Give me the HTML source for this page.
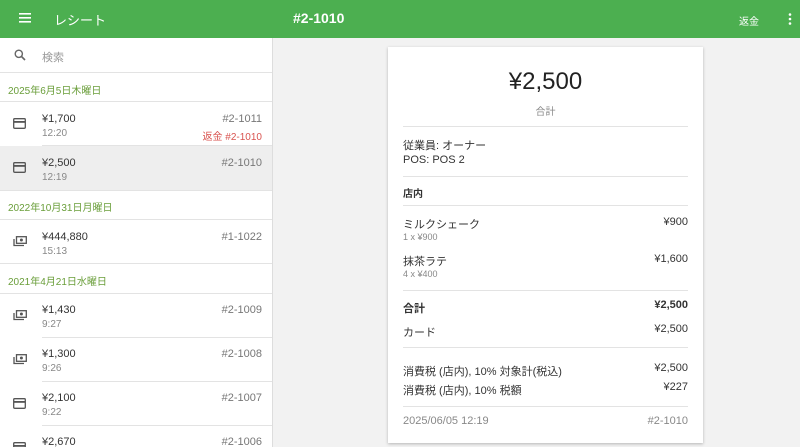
<!DOCTYPE html>
<html><head><meta charset="utf-8"><style>
*{margin:0;padding:0;box-sizing:border-box}
body{width:800px;height:447px;overflow:hidden;background:#f2f2f2;font-family:"Liberation Sans","Noto Sans CJK JP",sans-serif;position:relative;color:#333}
.a{position:absolute;white-space:nowrap}
#hdr{position:absolute;left:0;top:0;width:800px;height:38px;background:#4caf50;color:#fff}
#left{position:absolute;left:0;top:38px;width:273px;height:409px;background:#fff;border-right:1px solid #ddd;overflow:hidden}
.line{position:absolute;height:1px;background:#e3e3e3}
.date{color:#6a9e3a;font-size:10px}
.amt{font-size:11px;color:#333}
.tm{font-size:10px;color:#888}
.no{font-size:11px;color:#777;right:10px}
#card{position:absolute;left:388px;top:47px;width:315px;height:396px;background:#fff;box-shadow:0 1px 3px rgba(0,0,0,.25)}
#card .t{font-size:11px;color:#333}
#card .r{right:15px}
#card .l{left:15px}
</style></head><body>
<div id="hdr">
 <svg class="a" style="left:19px;top:13px" width="12" height="10"><rect y="0" width="12" height="1.6" fill="#fff"/><rect y="4" width="12" height="1.6" fill="#fff"/><rect y="8" width="12" height="1.6" fill="#fff"/></svg>
 <div class="a" style="left:54px;top:10px;font-size:13px">レシート</div>
 <div class="a" style="left:293px;top:10px;font-size:14px;font-weight:bold">#2-1010</div>
 <div class="a" style="left:739px;top:13px;font-size:10px">返金</div>
 <svg class="a" style="left:788px;top:13px" width="4" height="12"><circle cx="2" cy="1.5" r="1.3" fill="#fff"/><circle cx="2" cy="6" r="1.3" fill="#fff"/><circle cx="2" cy="10.5" r="1.3" fill="#fff"/></svg>
</div>
<div id="left">
 <svg class="a" style="left:14px;top:11px" width="12" height="12"><circle cx="4.8" cy="4.8" r="3.6" fill="none" stroke="#666" stroke-width="1.4"/><path d="M7.5 7.5L11 11" stroke="#666" stroke-width="1.6"/></svg>
 <div class="a" style="left:42px;top:11px;font-size:11px;color:#999">検索</div>
 <div class="line" style="left:0;top:34px;width:273px"></div>
 <div class="a date" style="left:8px;top:44px">2025年6月5日木曜日</div>
 <div class="line" style="left:0;top:63px;width:273px"></div>
 <svg class="a" style="left:13px;top:80px" width="13" height="11"><rect x=".7" y=".7" width="11.6" height="9.6" rx="1" fill="none" stroke="#555" stroke-width="1.3"/><rect x="1" y="3" width="11" height="1.8" fill="#555"/></svg>
 <div class="a amt" style="left:42px;top:75px">¥1,700</div>
 <div class="a tm" style="left:42px;top:90px">12:20</div>
 <div class="a no" style="top:75px">#2-1011</div>
 <div class="a" style="right:10px;top:90px;font-size:10px;color:#d9534f">返金 #2-1010</div>
 <div class="line" style="left:42px;top:107px;width:231px"></div>
 <div class="a" style="left:0;top:108px;width:273px;height:44px;background:#eee"></div>
 <svg class="a" style="left:13px;top:124px" width="13" height="11"><rect x=".7" y=".7" width="11.6" height="9.6" rx="1" fill="none" stroke="#555" stroke-width="1.3"/><rect x="1" y="3" width="11" height="1.8" fill="#555"/></svg>
 <div class="a amt" style="left:42px;top:119px">¥2,500</div>
 <div class="a tm" style="left:42px;top:134px">12:19</div>
 <div class="a no" style="top:119px">#2-1010</div>
 <div class="line" style="left:0;top:152px;width:273px"></div>
 <div class="a date" style="left:8px;top:161px">2022年10月31日月曜日</div>
 <div class="line" style="left:0;top:181px;width:273px"></div>
 <svg class="a" style="left:13px;top:198px" width="14" height="11"><rect x="3.5" y=".7" width="9.8" height="6.6" fill="none" stroke="#555" stroke-width="1.3"/><circle cx="8.4" cy="4" r="1.5" fill="#555"/><path d="M1 3v6.5h10" fill="none" stroke="#555" stroke-width="1.3"/></svg>
 <div class="a amt" style="left:42px;top:193px">¥444,880</div>
 <div class="a tm" style="left:42px;top:208px">15:13</div>
 <div class="a no" style="top:193px">#1-1022</div>
 <div class="line" style="left:0;top:225px;width:273px"></div>
 <div class="a date" style="left:8px;top:235px">2021年4月21日水曜日</div>
 <div class="line" style="left:0;top:255px;width:273px"></div>
 <svg class="a" style="left:13px;top:272px" width="14" height="11"><rect x="3.5" y=".7" width="9.8" height="6.6" fill="none" stroke="#555" stroke-width="1.3"/><circle cx="8.4" cy="4" r="1.5" fill="#555"/><path d="M1 3v6.5h10" fill="none" stroke="#555" stroke-width="1.3"/></svg>
 <div class="a amt" style="left:42px;top:266px">¥1,430</div>
 <div class="a tm" style="left:42px;top:281px">9:27</div>
 <div class="a no" style="top:266px">#2-1009</div>
 <div class="line" style="left:42px;top:299px;width:231px"></div>
 <svg class="a" style="left:13px;top:316px" width="14" height="11"><rect x="3.5" y=".7" width="9.8" height="6.6" fill="none" stroke="#555" stroke-width="1.3"/><circle cx="8.4" cy="4" r="1.5" fill="#555"/><path d="M1 3v6.5h10" fill="none" stroke="#555" stroke-width="1.3"/></svg>
 <div class="a amt" style="left:42px;top:310px">¥1,300</div>
 <div class="a tm" style="left:42px;top:325px">9:26</div>
 <div class="a no" style="top:310px">#2-1008</div>
 <div class="line" style="left:42px;top:343px;width:231px"></div>
 <svg class="a" style="left:13px;top:360px" width="13" height="11"><rect x=".7" y=".7" width="11.6" height="9.6" rx="1" fill="none" stroke="#555" stroke-width="1.3"/><rect x="1" y="3" width="11" height="1.8" fill="#555"/></svg>
 <div class="a amt" style="left:42px;top:354px">¥2,100</div>
 <div class="a tm" style="left:42px;top:369px">9:22</div>
 <div class="a no" style="top:354px">#2-1007</div>
 <div class="line" style="left:42px;top:387px;width:231px"></div>
 <svg class="a" style="left:13px;top:404px" width="13" height="11"><rect x=".7" y=".7" width="11.6" height="9.6" rx="1" fill="none" stroke="#555" stroke-width="1.3"/><rect x="1" y="3" width="11" height="1.8" fill="#555"/></svg>
 <div class="a amt" style="left:42px;top:398px">¥2,670</div>
 <div class="a no" style="top:398px">#2-1006</div>
</div>
<div id="card">
 <div class="a" style="left:0;width:315px;text-align:center;top:21px;font-size:24px;color:#222">¥2,500</div>
 <div class="a" style="left:0;width:315px;text-align:center;top:56px;font-size:10px;color:#888">合計</div>
 <div class="line" style="left:15px;width:285px;top:79px"></div>
 <div class="a t l" style="top:90px">従業員: オーナー</div>
 <div class="a t l" style="top:107px">POS: POS 2</div>
 <div class="line" style="left:15px;width:285px;top:129px"></div>
 <div class="a t l" style="top:138px;font-weight:bold;font-size:10px">店内</div>
 <div class="line" style="left:15px;width:285px;top:158px"></div>
 <div class="a t l" style="top:169px">ミルクシェーク</div>
 <div class="a t r" style="top:169px">¥900</div>
 <div class="a l" style="top:185px;font-size:9px;color:#888">1 x ¥900</div>
 <div class="a t l" style="top:206px">抹茶ラテ</div>
 <div class="a t r" style="top:206px">¥1,600</div>
 <div class="a l" style="top:222px;font-size:9px;color:#888">4 x ¥400</div>
 <div class="line" style="left:15px;width:285px;top:243px"></div>
 <div class="a t l" style="top:253px;font-weight:bold">合計</div>
 <div class="a t r" style="top:252px;font-weight:bold">¥2,500</div>
 <div class="a t l" style="top:277px">カード</div>
 <div class="a t r" style="top:276px">¥2,500</div>
 <div class="line" style="left:15px;width:285px;top:300px"></div>
 <div class="a t l" style="top:316px">消費税 (店内), 10% 対象計(税込)</div>
 <div class="a t r" style="top:315px">¥2,500</div>
 <div class="a t l" style="top:335px">消費税 (店内), 10% 税額</div>
 <div class="a t r" style="top:334px">¥227</div>
 <div class="line" style="left:15px;width:285px;top:359px"></div>
 <div class="a l" style="top:368px;font-size:11px;color:#888">2025/06/05 12:19</div>
 <div class="a r" style="top:368px;font-size:11px;color:#888">#2-1010</div>
</div>
</body></html>
